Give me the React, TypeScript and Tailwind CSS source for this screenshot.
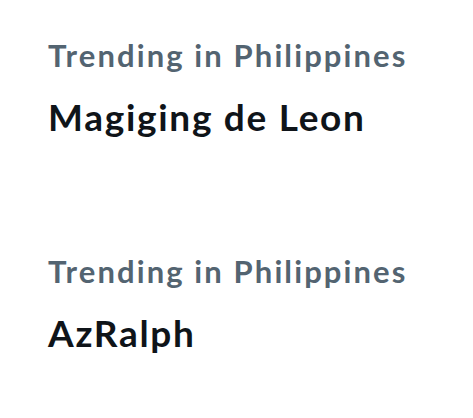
const trends = [
  { place: 'Trending in Philippines', name: 'Magiging de Leon' },
  { place: 'Trending in Philippines', name: 'AzRalph' },
];

export default function App() {
  return (
    <div className="w-[473px] h-[418px] bg-white pl-[48px] pt-[36px] font-['Lato',sans-serif] flex flex-col gap-[113px]">
      {trends.map((t, i) => (
        <div key={i} className="flex flex-col">
          <span className="text-[31px] leading-[38px] font-bold tracking-[2.1px] text-[#536471]">{t.place}</span>
          <span className="mt-[21px] text-[37px] leading-[44px] font-bold tracking-[1.7px] text-[#0f1419]">{t.name}</span>
        </div>
      ))}
    </div>
  );
}
